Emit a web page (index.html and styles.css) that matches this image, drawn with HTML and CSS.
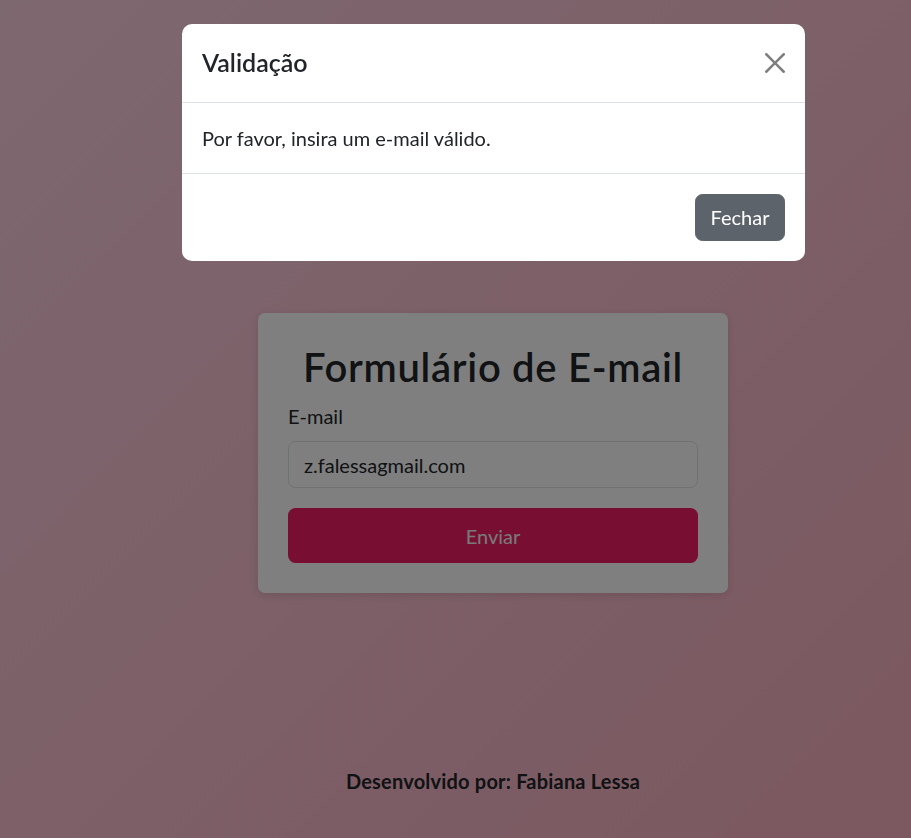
FILE: index.html
```html
<!DOCTYPE html>
<html lang="pt-BR">
<head>
<meta charset="utf-8">
<title>Formulário de E-mail</title>
<link rel="stylesheet" href="styles.css">
</head>
<body>
<div class="page">
  <main class="main">
    <form class="card">
      <h2 class="card-title">Formulário de E-mail</h2>
      <label class="form-label" for="email">E-mail</label>
      <input class="form-control" id="email" type="text" value="z.falessagmail.com">
      <button class="btn-send" type="button">Enviar</button>
    </form>
  </main>
  <footer class="footer">Desenvolvido por: Fabiana Lessa</footer>
</div>

<div class="backdrop"></div>
<div class="modal">
  <div class="modal-dialog">
    <div class="modal-header">
      <h5 class="modal-title">Validação</h5>
      <button class="btn-close" type="button" aria-label="Close">
        <svg viewBox="0 0 16 16" width="20" height="20"><path d="M.293.293a1 1 0 0 1 1.414 0L8 6.586 14.293.293a1 1 0 1 1 1.414 1.414L9.414 8l6.293 6.293a1 1 0 0 1-1.414 1.414L8 9.414l-6.293 6.293a1 1 0 0 1-1.414-1.414L6.586 8 .293 1.707a1 1 0 0 1 0-1.414z"/></svg>
      </button>
    </div>
    <div class="modal-body">Por favor, insira um e-mail válido.</div>
    <div class="modal-footer">
      <button class="btn-secondary" type="button">Fechar</button>
    </div>
  </div>
</div>
</body>
</html>
```

FILE: styles.css
```css
* { box-sizing: border-box; }
html, body { margin: 0; padding: 0; }
body {
  font-family: Lato, "Noto Sans", sans-serif;
  font-size: 20px;
  line-height: 1.5;
  color: #212529;
  background: linear-gradient(135deg, #fcd0e0 0%, #f8b0c0 100%);
  min-height: 838px;
  overflow: hidden;
}
.page {
  min-height: 838px;
  display: flex;
  flex-direction: column;
  padding-left: 75px;
}
.main {
  display: flex;
  justify-content: center;
  padding-top: 313px;
}
.card {
  width: 470px;
  background: #fff;
  border-radius: 7px;
  padding: 30px;
  display: flex;
  flex-direction: column;
  box-shadow: 0 2px 8px rgba(0,0,0,0.12);
}
.card-title {
  margin: 0 0 10px;
  font-size: 40px;
  font-weight: 600;
  line-height: 1.2;
  letter-spacing: 0.7px;
  text-align: center;
  color: #212529;
}
.form-label {
  display: block;
  margin-bottom: 10px;
}
.form-control {
  font: inherit;
  color: #212529;
  height: 47px;
  padding: 7.5px 15px;
  border: 1px solid #dee2e6;
  border-radius: 7.5px;
  background: #fff;
  margin-bottom: 20px;
}
.btn-send {
  font: inherit;
  height: 55px;
  border: 0;
  border-radius: 7.5px;
  background: #f01e66;
  color: #f2f2f2;
}
.footer {
  margin-top: auto;
  text-align: center;
  font-weight: 700;
  letter-spacing: 0.2px;
  padding-bottom: 42px;
}
.backdrop {
  position: fixed;
  inset: 0;
  background: rgba(0,0,0,0.5);
}
.modal {
  position: fixed;
  inset: 0;
  padding-left: 76px;
  display: flex;
  justify-content: center;
  align-items: flex-start;
}
.modal-dialog {
  margin-top: 24px;
  width: 623px;
  background: #fff;
  border-radius: 10px;
  overflow: hidden;
}
.modal-header {
  display: flex;
  align-items: center;
  justify-content: space-between;
  padding: 20px;
  border-bottom: 1px solid #dee2e6;
}
.modal-title {
  margin: 0;
  font-size: 25px;
  font-weight: 600;
  line-height: 1.5;
}
.btn-close {
  width: 20px;
  height: 20px;
  padding: 0;
  border: 0;
  background: transparent;
  display: flex;
}
.btn-close svg { fill: #000; opacity: 0.5; }
.modal-body {
  padding: 20px;
}
.modal-footer {
  display: flex;
  justify-content: flex-end;
  padding: 15px;
  border-top: 1px solid #dee2e6;
}
.btn-secondary {
  font: inherit;
  margin: 5px;
  padding: 7.5px 14.5px;
  border: 1px solid #5c636a;
  border-radius: 7.5px;
  background: #5c636a;
  color: #fff;
  line-height: 1.5;
}
```
